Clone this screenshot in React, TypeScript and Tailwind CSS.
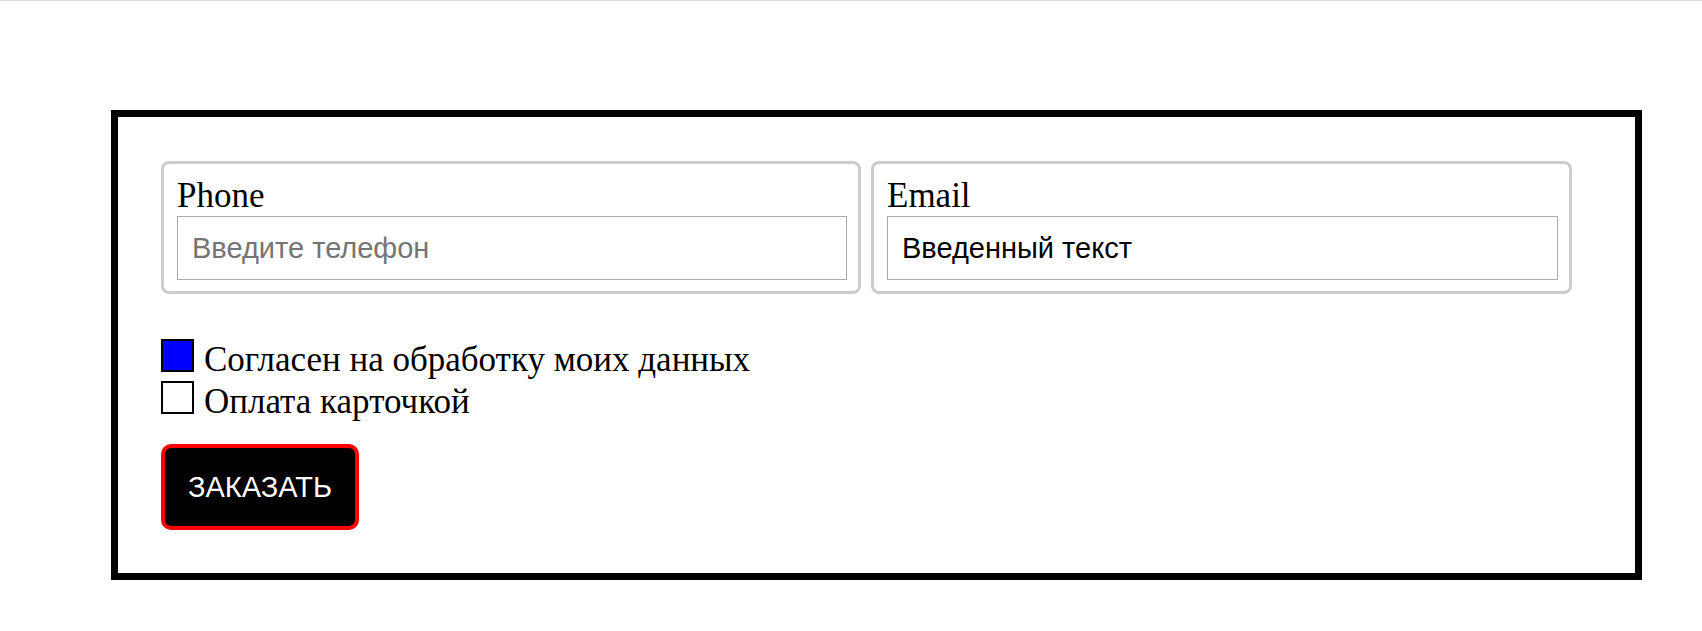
import React from "react";

function Field({
  label,
  placeholder,
  value,
  widthClass,
}: {
  label: string;
  placeholder: string;
  value?: string;
  widthClass: string;
}) {
  return (
    <div
      className={`${widthClass} h-[133px] border-[3px] border-[#cccccc] rounded-[8px] pt-[12px] pl-[13px] pr-[11px] pb-[11px] flex flex-col`}
    >
      <label className="block text-[35px] leading-[40px] text-black font-['Liberation_Serif',serif]">
        {label}
      </label>
      <input
        className="w-full h-[64px] border border-[#aaaaaa] px-[14px] text-[29px] text-black placeholder:text-[#757575] font-['Liberation_Sans',Arial,sans-serif] outline-none bg-white"
        placeholder={placeholder}
        defaultValue={value}
      />
    </div>
  );
}

function CheckRow({ label, checked }: { label: string; checked: boolean }) {
  return (
    <label className="flex items-start h-[42px]">
      <input
        type="checkbox"
        defaultChecked={checked}
        className="appearance-none w-[33px] h-[33px] border-2 border-black bg-white checked:bg-[#0000ff] m-0 shrink-0"
      />
      <span className="ml-[10px] text-[35px] leading-[42px] text-black font-['Liberation_Serif',serif]">
        {label}
      </span>
    </label>
  );
}

export default function App() {
  return (
    <div className="w-[1702px] h-[631px] bg-white border-t border-[#dddddd] overflow-hidden">
      <div className="pt-[109px] pl-[111px]">
        <div className="w-[1531px] h-[470px] border-[7px] border-black pt-[44px] pl-[43px] flex flex-col">
          <div className="flex gap-[10px]">
            <Field label="Phone" placeholder="Введите телефон" widthClass="w-[700px]" />
            <Field
              label="Email"
              placeholder="Введите email"
              value="Введенный текст"
              widthClass="w-[701px]"
            />
          </div>
          <div className="mt-[45px] flex flex-col">
            <CheckRow label="Согласен на обработку моих данных" checked={true} />
            <CheckRow label="Оплата карточкой" checked={false} />
          </div>
          <button className="mt-[21px] w-[198px] h-[86px] bg-black border-4 border-[#ff0000] rounded-[10px] text-white text-[29px] leading-[32px] font-['Liberation_Sans',Arial,sans-serif] flex items-center justify-center">
            ЗАКАЗАТЬ
          </button>
        </div>
      </div>
    </div>
  );
}
